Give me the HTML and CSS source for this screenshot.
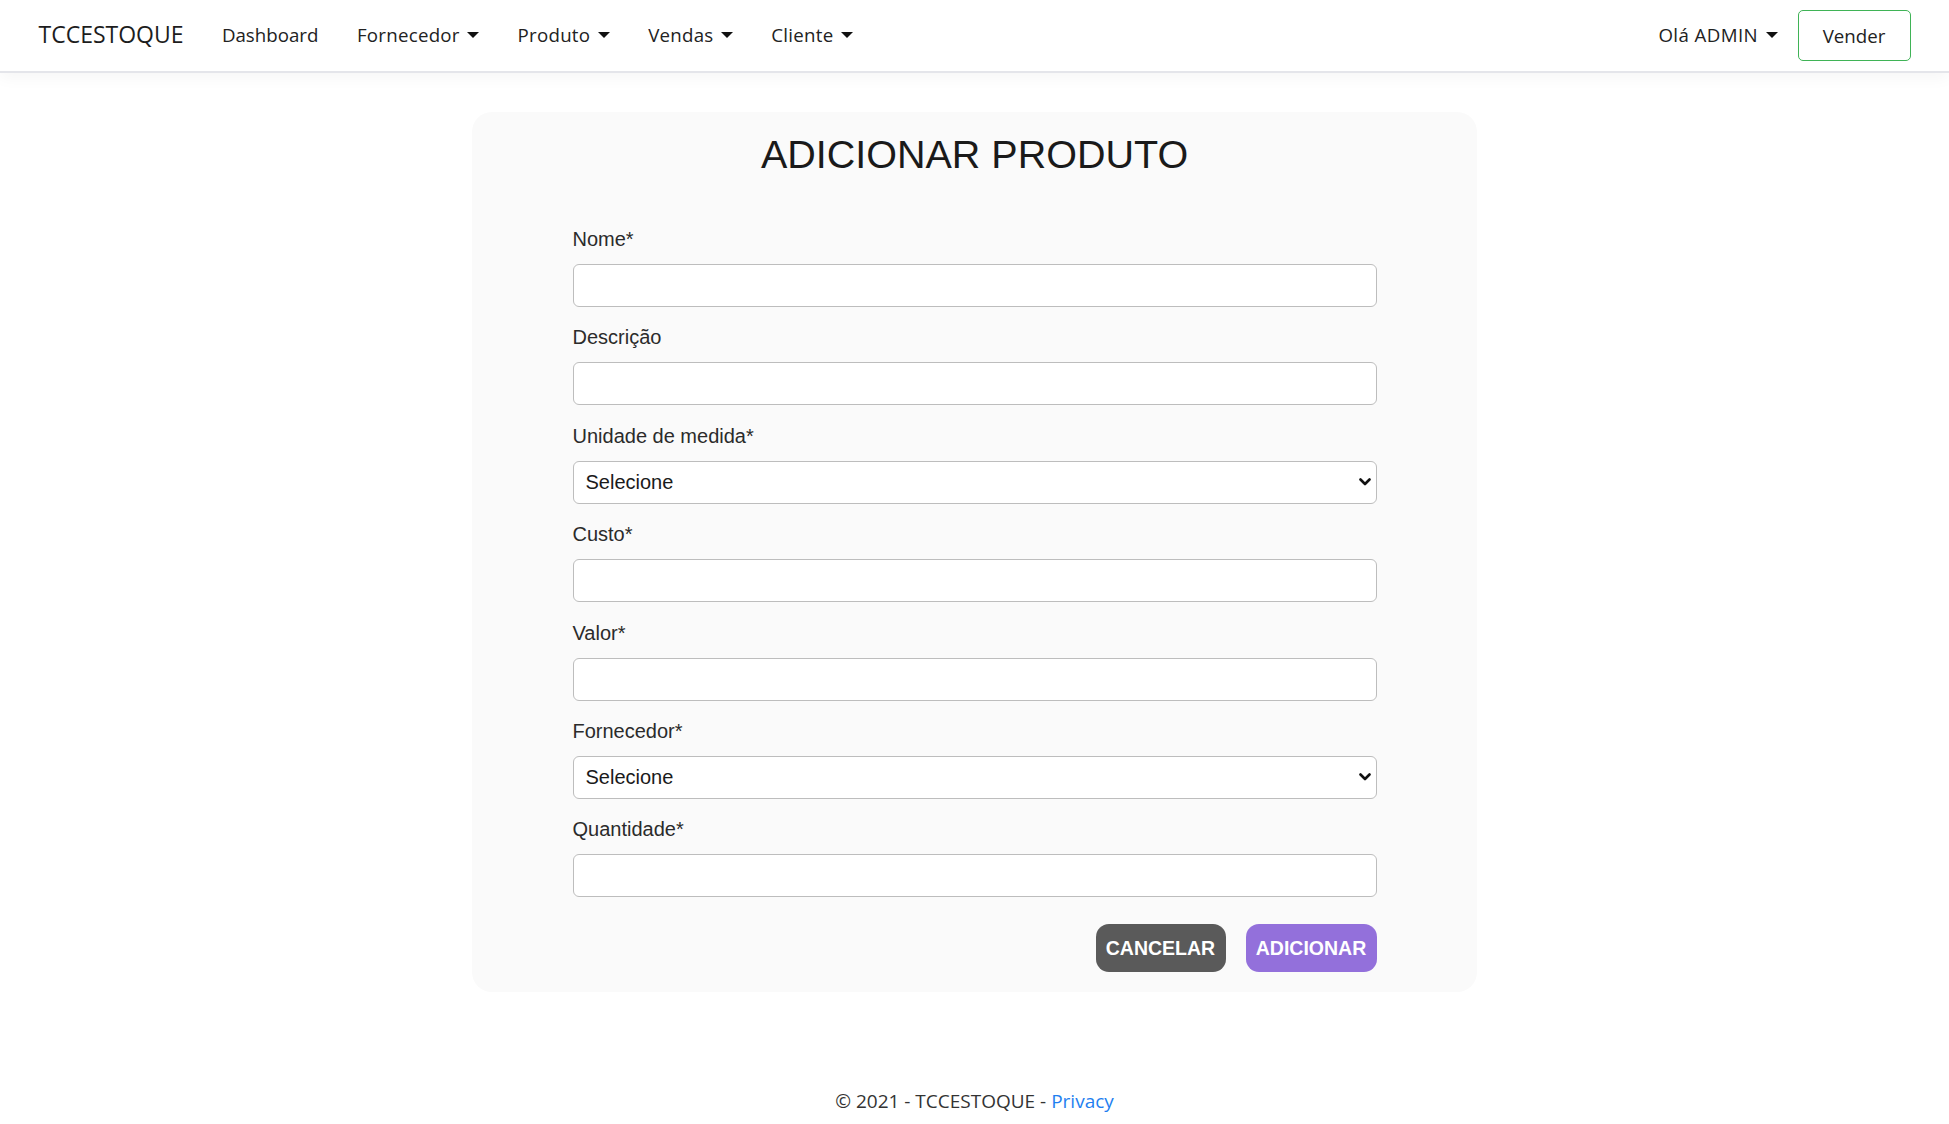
FILE: index.html
```html
<!DOCTYPE html>
<html lang="pt-BR">
<head>
<meta charset="utf-8">
<title>Adicionar Produto - TCCESTOQUE</title>
<link rel="stylesheet" href="styles.css">
</head>
<body>
<header class="navbar">
  <div class="nav-left">
    <a class="brand" href="#">TCCESTOQUE</a>
    <a class="nav-link" href="#">Dashboard</a>
    <a class="nav-link dropdown" href="#">Fornecedor</a>
    <a class="nav-link dropdown" href="#">Produto</a>
    <a class="nav-link dropdown" href="#">Vendas</a>
    <a class="nav-link dropdown" href="#">Cliente</a>
  </div>
  <div class="nav-right">
    <a class="nav-link dropdown user" href="#">Olá ADMIN</a>
    <a class="btn-vender" href="#">Vender</a>
  </div>
</header>

<main class="main">
  <section class="card">
    <h1 class="title">ADICIONAR PRODUTO</h1>
    <form class="form">
      <div class="group">
        <label class="label">Nome*</label>
        <input class="field" type="text">
      </div>
      <div class="group">
        <label class="label">Descrição</label>
        <input class="field" type="text">
      </div>
      <div class="group">
        <label class="label">Unidade de medida*</label>
        <div class="select-wrap">
          <select class="field select"><option>Selecione</option></select>
          <svg class="chevron" width="12" height="8" viewBox="0 0 12 8"><path d="M1.5 1.5 L6 6 L10.5 1.5" fill="none" stroke="#111" stroke-width="2.6" stroke-linecap="round" stroke-linejoin="round"/></svg>
        </div>
      </div>
      <div class="group">
        <label class="label">Custo*</label>
        <input class="field" type="text">
      </div>
      <div class="group">
        <label class="label">Valor*</label>
        <input class="field" type="text">
      </div>
      <div class="group">
        <label class="label">Fornecedor*</label>
        <div class="select-wrap">
          <select class="field select"><option>Selecione</option></select>
          <svg class="chevron" width="12" height="8" viewBox="0 0 12 8"><path d="M1.5 1.5 L6 6 L10.5 1.5" fill="none" stroke="#111" stroke-width="2.6" stroke-linecap="round" stroke-linejoin="round"/></svg>
        </div>
      </div>
      <div class="group">
        <label class="label">Quantidade*</label>
        <input class="field" type="text">
      </div>
      <div class="actions">
        <button type="button" class="btn btn-cancel">CANCELAR</button>
        <button type="button" class="btn btn-add">ADICIONAR</button>
      </div>
    </form>
  </section>
</main>

<footer class="footer">
  © 2021 - TCCESTOQUE - <a class="privacy" href="#">Privacy</a>
</footer>
</body>
</html>
```

FILE: styles.css
```css
* { box-sizing: border-box; }
html, body { margin: 0; padding: 0; }
body {
  background: #fff;
  font-family: "Open Sans", "Noto Sans", sans-serif;
  color: #212529;
  height: 1124px;
  overflow: hidden;
}
a { text-decoration: none; color: inherit; }

.navbar {
  height: 73px;
  border-bottom: 2px solid #e4e5ea;
  box-shadow: 0 5px 15px rgba(0,0,0,0.04);
  display: flex;
  align-items: center;
  justify-content: space-between;
  padding: 0 38.5px;
  font-size: 18.7px;
}
.nav-left, .nav-right { display: flex; align-items: center; }
.nav-left { padding-bottom: 3px; }
.brand { font-size: 23px; color: #1d1d1d; margin-right: 19px; }
.nav-link { padding: 0 19.4px; color: #222; }
.nav-left .dropdown { letter-spacing: 0.25px; padding: 0 19.2px; }
.nav-left .nav-link:last-child { padding-right: 0; }
.dropdown::after {
  content: "";
  display: inline-block;
  margin-left: 7.5px;
  vertical-align: 4px;
  border-top: 6.5px solid #111;
  border-left: 6.5px solid transparent;
  border-right: 6.5px solid transparent;
}
.user { padding: 0; margin-right: 20px; letter-spacing: 0.4px; padding-bottom: 3px; }
.btn-vender {
  display: flex;
  align-items: center;
  justify-content: center;
  width: 113px;
  height: 51px;
  border: 1.5px solid #3fb356;
  border-radius: 5px;
  color: #222;
}

.main { padding-top: 39px; }
.card {
  width: 1005px;
  margin: 0 auto;
  background: #fafafa;
  border-radius: 20px;
  padding: 19px 0 20px;
}
.title {
  margin: 0;
  text-align: center;
  font-family: "Liberation Sans", Arial, sans-serif;
  font-weight: 400;
  font-size: 39.5px;
  line-height: 47.4px;
  color: #1a1a1a;
}
.form {
  width: 804px;
  margin: 48.6px auto 0;
  font-family: "Liberation Sans", Arial, sans-serif;
}
.group { margin-bottom: 18.4px; }
.label {
  display: block;
  font-size: 20px;
  line-height: 24px;
  margin-bottom: 13px;
  color: #2b2b2b;
}
.field {
  display: block;
  width: 100%;
  height: 43px;
  border: 1.5px solid #bdbdbd;
  border-radius: 6px;
  background: #fff;
  font-family: "Liberation Sans", Arial, sans-serif;
  font-size: 20px;
  color: #1a1a1a;
  padding: 0 12px;
  outline: none;
}
.select-wrap { position: relative; }
.select { appearance: none; -webkit-appearance: none; }
.chevron { position: absolute; right: 6px; top: 17.5px; pointer-events: none; }

.actions {
  display: flex;
  justify-content: flex-end;
  gap: 20px;
  margin-top: 27px;
}
.btn {
  width: 130px;
  height: 48px;
  border: none;
  border-radius: 13px;
  color: #fff;
  font-family: "Liberation Sans", Arial, sans-serif;
  font-weight: 700;
  font-size: 19.5px;
  padding: 0;
}
.btn-cancel { background: #5a5a5a; }
.btn-add { background: #9370db; width: 131px; }

.footer {
  margin-top: 94px;
  text-align: center;
  font-size: 19px;
  line-height: 30px;
  color: #333;
}
.privacy { color: #1f7ff0; }
```
